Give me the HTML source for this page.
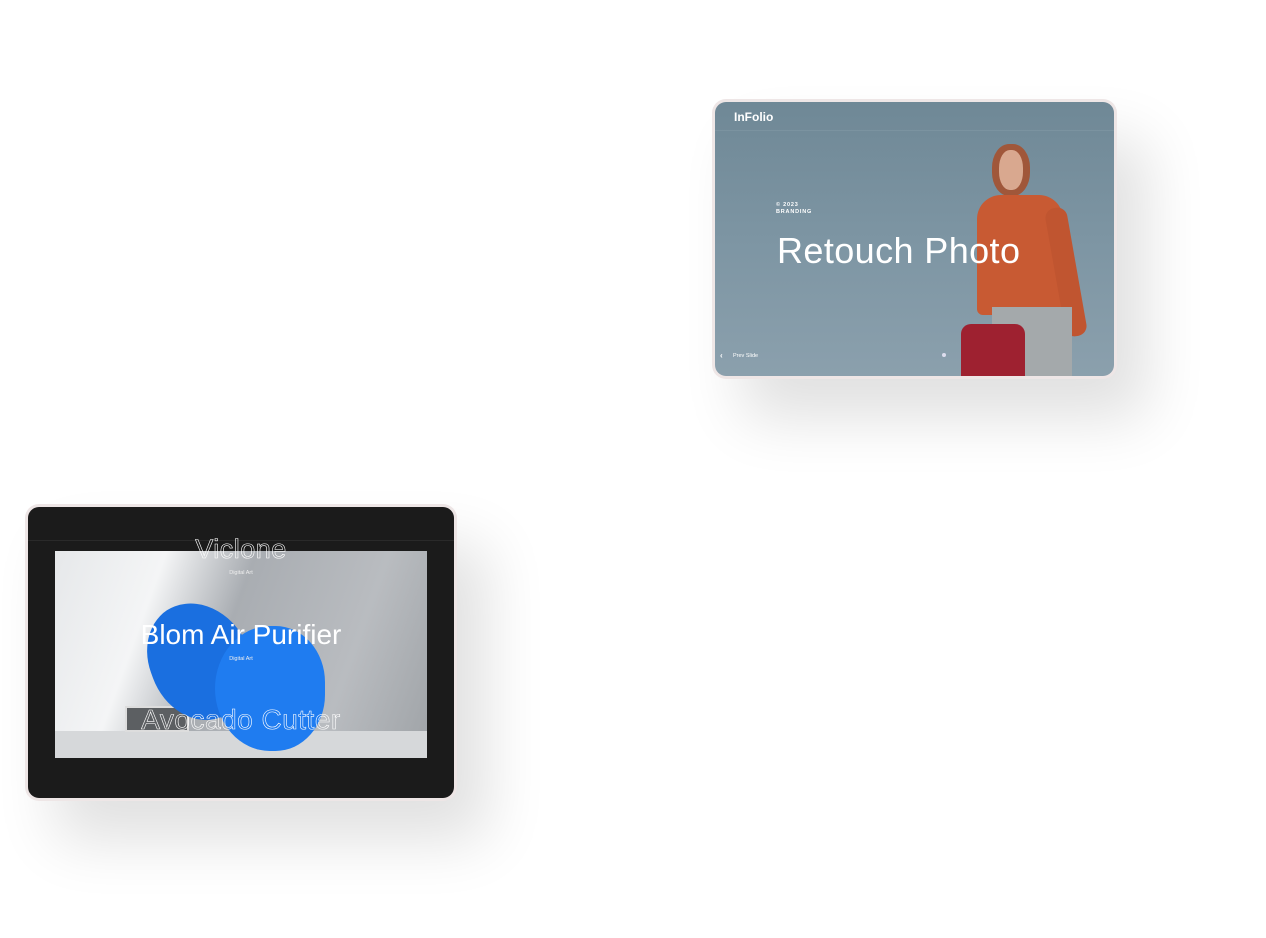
<!DOCTYPE html>
<html><head><style>
body{margin:0;width:1266px;height:938px;background:#fff;position:relative;overflow:hidden;font-family:"Liberation Sans",sans-serif}
.f{position:absolute;border-radius:14px;background:#eee6e6;box-shadow:30px 40px 60px rgba(0,0,0,.12)}
.in{position:absolute;left:3px;top:3px;right:3px;bottom:3px;border-radius:11px;overflow:hidden}
</style></head><body>
<div class="f" style="left:712px;top:99px;width:405px;height:280px">
 <div class="in" style="background:linear-gradient(180deg,#6f8896 0%,#7d95a3 50%,#8ba0ad 100%)">
  <div style="position:absolute;left:0;right:0;top:28px;height:1px;background:rgba(255,255,255,.07)"></div>
  <div style="position:absolute;left:19px;top:8px;color:#fff;font-weight:bold;font-size:12px">InFolio</div>
  <div style="position:absolute;left:277px;top:42px;width:38px;height:52px;border-radius:45%;background:#a0573a"></div>
  <div style="position:absolute;left:284px;top:48px;width:24px;height:40px;border-radius:45%;background:#d9a88f"></div>
  <div style="position:absolute;left:262px;top:93px;width:86px;height:120px;border-radius:24px 24px 6px 6px;background:#c85a33"></div>
  <div style="position:absolute;left:340px;top:105px;width:22px;height:130px;border-radius:10px;background:#c05530;transform:rotate(-10deg)"></div>
  <div style="position:absolute;left:277px;top:205px;width:80px;height:70px;background:#a4a9ab"></div>
  <div style="position:absolute;left:246px;top:222px;width:64px;height:60px;border-radius:10px 10px 0 0;background:#9e2130"></div>
  <div style="position:absolute;left:61px;top:100px;color:#fff;font-size:5.5px;font-weight:bold;letter-spacing:.8px;line-height:7px">© 2023<br>BRANDING</div>
  <div style="position:absolute;left:62px;top:128px;color:#fff;font-size:36px;letter-spacing:.4px">Retouch Photo</div>
  <div style="position:absolute;left:5px;top:249px;color:#fff;font-size:8px;font-weight:bold">‹</div>
  <div style="position:absolute;left:18px;top:251px;color:#fff;font-size:5.5px">Prev Slide</div>
  <div style="position:absolute;left:227px;top:251px;width:4px;height:4px;border-radius:50%;background:#dde"></div>
 </div>
</div>
<div class="f" style="left:25px;top:504px;width:432px;height:297px">
 <div class="in" style="background:#1b1b1b">
  <div style="position:absolute;left:0;right:0;top:33px;height:1px;background:#2a2a2a"></div>
  <div style="position:absolute;left:27px;top:44px;width:372px;height:207px;overflow:hidden;background:linear-gradient(110deg,#e6e8ea 0%,#f4f5f6 25%,#a9adb2 45%,#b9bcc0 75%,#9fa3a7 100%)">
   <div style="position:absolute;left:0;right:0;top:180px;bottom:0;background:#d6d8da"></div>
   <div style="position:absolute;left:70px;top:155px;width:60px;height:22px;background:#5c5f62;border:2px solid #ddd"></div>
   <div style="position:absolute;left:95px;top:50px;width:100px;height:120px;border-radius:45% 55% 40% 50%;background:#1a6fe0;transform:rotate(-20deg)"></div>
   <div style="position:absolute;left:160px;top:75px;width:110px;height:125px;border-radius:50% 45% 45% 50%;background:#1f7cf0"></div>
  </div>
  <div style="position:absolute;left:0;width:426px;text-align:center;top:27px;color:transparent;-webkit-text-stroke:.6px #fff;font-size:27px;letter-spacing:.5px">Viclone</div>
  <div style="position:absolute;left:0;width:426px;text-align:center;top:63px;color:#eee;font-size:5.5px">Digital Art</div>
  <div style="position:absolute;left:0;width:426px;text-align:center;top:112px;color:#fff;font-size:28px">Blom Air Purifier</div>
  <div style="position:absolute;left:0;width:426px;text-align:center;top:149px;color:#eee;font-size:5.5px">Digital Art</div>
  <div style="position:absolute;left:0;width:426px;text-align:center;top:197px;color:transparent;-webkit-text-stroke:.6px #fff;font-size:28px;letter-spacing:.5px">Avocado Cutter</div>
 </div>
</div>
</body></html>
